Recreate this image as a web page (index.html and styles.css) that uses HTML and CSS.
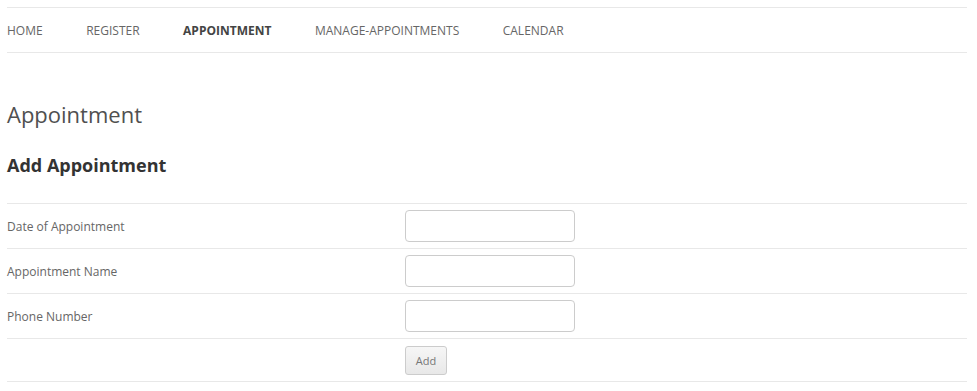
FILE: index.html
```html
<!DOCTYPE html>
<html>
<head>
<meta charset="utf-8">
<link rel="stylesheet" href="styles.css">
</head>
<body>
<div class="page">
  <nav class="nav">
    <a class="nav-item">Home</a>
    <a class="nav-item">Register</a>
    <a class="nav-item active">Appointment</a>
    <a class="nav-item">Manage-Appointments</a>
    <a class="nav-item">Calendar</a>
  </nav>
  <h1 class="title">Appointment</h1>
  <h2 class="subtitle">Add Appointment</h2>
  <div class="form">
    <div class="row">
      <div class="label">Date of Appointment</div>
      <div class="field"><input class="input" type="text"></div>
    </div>
    <div class="row">
      <div class="label">Appointment Name</div>
      <div class="field"><input class="input" type="text"></div>
    </div>
    <div class="row">
      <div class="label">Phone Number</div>
      <div class="field"><input class="input" type="text"></div>
    </div>
    <div class="row last">
      <div class="label"></div>
      <div class="field"><button class="btn">Add</button></div>
    </div>
  </div>
</div>
</body>
</html>
```
FILE: styles.css
```css
* { box-sizing: border-box; }
html, body { margin: 0; padding: 0; background: #fff; }
body { font-family: "Open Sans", "Liberation Sans", sans-serif; color: #555; }
.page { width: 960px; margin: 0 0 0 7px; padding-top: 7px; }
.nav {
  display: flex;
  gap: 43.5px;
  height: 46px;
  align-items: center;
  border-top: 1px solid #e8e8e8;
  border-bottom: 1px solid #e8e8e8;
}
.nav-item { font-size: 12px; text-transform: uppercase; color: #666; text-decoration: none; }
.nav-item.active { font-weight: 700; color: #444; }
.title {
  margin: 46px 0 0;
  font-size: 22px;
  font-weight: 400;
  color: #505050;
  line-height: 30px;
}
.subtitle {
  margin: 24px 0 0;
  font-size: 18px;
  font-weight: 700;
  color: #333;
  line-height: 24px;
}
.form { margin-top: 26px; border-top: 1px solid #e8e8e8; }
.row {
  display: grid;
  grid-template-columns: 398px 1fr;
  height: 45px;
  align-items: center;
  border-bottom: 1px solid #e8e8e8;
}
.row.last { height: 43px; }
.label { font-size: 12px; color: #666; }
.field { display: flex; align-items: center; }
.input {
  width: 170px;
  height: 32px;
  border: 1px solid #ccc;
  border-radius: 4px;
  background: #fff;
}
.btn {
  font-family: inherit;
  width: 42px;
  height: 29px;
  font-size: 11px;
  color: #777;
  background: linear-gradient(#f6f6f6, #e8e8e8);
  border: 1px solid #ccc;
  border-radius: 3px;
  padding: 0;
}
```
